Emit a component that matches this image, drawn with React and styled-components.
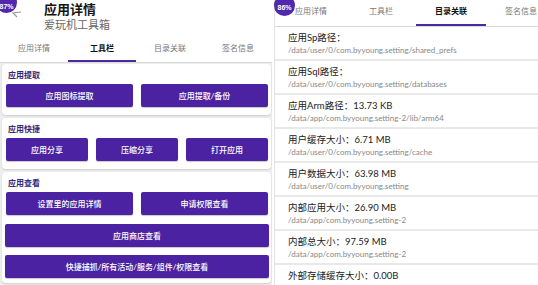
import React from 'react';
import styled, { createGlobalStyle } from 'styled-components';

const GlobalStyle = createGlobalStyle`
  html, body {
    margin: 0;
    padding: 0;
    background: #fff;
  }
  body {
    font-family: Lato, "Noto Sans CJK SC", sans-serif;
  }
`;

const Screen = styled.div`
  position: relative;
  display: flex;
  width: 538px;
  height: 285px;
  overflow: hidden;
  background: #fff;
`;

// ---------- left phone ----------
const LeftPane = styled.div`
  flex: none;
  width: 272px;
  height: 100%;
  display: flex;
  flex-direction: column;
  background: #eeeeee;
`;

const Header = styled.div`
  flex: none;
  background: #fff;
`;

const TitleBlock = styled.div`
  height: 34px;
  box-sizing: border-box;
  padding: 1px 0 0 44px;
`;

const AppTitle = styled.div`
  font-size: 13px;
  font-weight: 700;
  line-height: 16px;
  color: #151515;
`;

const AppSub = styled.div`
  margin-top: 1px;
  font-size: 11px;
  line-height: 13px;
  color: #666;
`;

const Tabs = styled.div`
  flex: none;
  display: flex;
  height: ${(p) => p.$h}px;
  box-sizing: border-box;
  padding-left: ${(p) => p.$pad || 0}px;
  border-bottom: 1px solid #dadada;
  background: #fff;
`;

const Tab = styled.div`
  position: relative;
  flex: ${(p) => (p.$w ? `0 0 ${p.$w}px` : '1 1 0')};
  display: flex;
  align-items: center;
  justify-content: center;
  padding-bottom: ${(p) => p.$pb || 0}px;
  box-sizing: border-box;
  font-size: 8px;
  color: ${(p) => (p.$active ? '#111' : '#777')};
  font-weight: ${(p) => (p.$active ? 700 : 400)};
  &::after {
    content: '';
    display: ${(p) => (p.$active ? 'block' : 'none')};
    position: absolute;
    left: 0;
    right: 0;
    bottom: 0;
    height: 2px;
    background: #4a2aa0;
  }
`;

const Body = styled.div`
  display: flex;
  flex-direction: column;
  gap: 3px;
  padding: 1px 1px 0 2px;
`;

const Card = styled.div`
  flex: none;
  background: #fff;
  border-radius: 4px;
  box-shadow: 0 1px 2px rgba(0, 0, 0, 0.14);
  padding: 5px 3px ${(p) => p.$pb || 8}px 4px;
`;

const CardTitle = styled.div`
  padding-left: 2px;
  margin-bottom: 3px;
  font-size: 8px;
  font-weight: 700;
  line-height: 12px;
  color: #33297a;
`;

const Rows = styled.div`
  display: flex;
  flex-direction: column;
  gap: 8.5px;
`;

const ButtonRow = styled.div`
  display: grid;
  grid-template-columns: repeat(${(p) => p.$cols}, 1fr);
  column-gap: 8px;
  margin: 0 ${(p) => (p.$wide ? '-1px' : '0')};
`;

const Button = styled.div`
  height: 23px;
  display: flex;
  align-items: center;
  justify-content: center;
  border-radius: 2px;
  background: #4b22a2;
  box-shadow: 0 1px 1px rgba(0, 0, 0, 0.22);
  color: #fff;
  font-size: 8px;
  font-weight: 500;
`;

// ---------- right phone ----------
const RightPane = styled.div`
  flex: none;
  width: 282px;
  height: 100%;
  margin-left: 2px;
  border-left: 1px solid #e3e3e3;
  background: #e9e9e9;
  display: flex;
  flex-direction: column;
`;

const List = styled.div`
  flex: none;
  display: flex;
  flex-direction: column;
  gap: 2px;
`;

const Item = styled.div`
  flex: none;
  background: #fff;
  padding: 5px 0 4px 13px;
`;

const ItemTitle = styled.div`
  font-size: 9.5px;
  line-height: 12px;
  color: #222;
`;

const ItemPath = styled.div`
  margin-top: 1px;
  font-size: 8px;
  line-height: 10px;
  color: #888;
  white-space: nowrap;
`;

// ---------- floating memory ball ----------
const Ball = styled.div`
  position: absolute;
  left: ${(p) => p.$x}px;
  top: ${(p) => p.$y}px;
  width: 21px;
  height: 21px;
  border-radius: 50%;
  background: #5128ab;
  color: #fff;
  font-size: 7px;
  font-weight: 700;
  display: flex;
  align-items: center;
  justify-content: center;
  padding-top: ${(p) => p.$pt || 0}px;
  box-sizing: border-box;
  font-family: "Liberation Sans", sans-serif;
`;

const Tail = styled.svg`
  position: absolute;
  left: 10px;
  top: 9px;
`;

const leftTabs = ['应用详情', '工具栏', '目录关联', '签名信息'];

const items = [
  ['应用Sp路径：', '/data/user/0/com.byyoung.setting/shared_prefs'],
  ['应用Sql路径：', '/data/user/0/com.byyoung.setting/databases'],
  ['应用Arm路径：13.73 KB', '/data/app/com.byyoung.setting-2/lib/arm64'],
  ['用户缓存大小：6.71 MB', '/data/user/0/com.byyoung.setting/cache'],
  ['用户数据大小：63.98 MB', '/data/user/0/com.byyoung.setting'],
  ['内部应用大小：26.90 MB', '/data/app/com.byyoung.setting-2'],
  ['内部总大小：97.59 MB', '/data/app/com.byyoung.setting-2'],
  ['外部存储缓存大小：0.00B', null],
];

const App = () => {
  return (
    <Screen>
      <GlobalStyle />
      <LeftPane>
        <Header>
          <TitleBlock>
            <AppTitle>应用详情</AppTitle>
            <AppSub>爱玩机工具箱</AppSub>
          </TitleBlock>
          <Tabs $h={29}>
            {leftTabs.map((t, i) => (
              <Tab key={t} $active={i === 1} $pb={1}>{t}</Tab>
            ))}
          </Tabs>
        </Header>
        <Body>
          <Card>
            <CardTitle>应用提取</CardTitle>
            <ButtonRow $cols={2}>
              <Button>应用图标提取</Button>
              <Button>应用提取/备份</Button>
            </ButtonRow>
          </Card>
          <Card>
            <CardTitle>应用快捷</CardTitle>
            <ButtonRow $cols={3}>
              <Button>应用分享</Button>
              <Button>压缩分享</Button>
              <Button>打开应用</Button>
            </ButtonRow>
          </Card>
          <Card $pb={5}>
            <CardTitle>应用查看</CardTitle>
            <Rows>
              <ButtonRow $cols={2}>
                <Button>设置里的应用详情</Button>
                <Button>申请权限查看</Button>
              </ButtonRow>
              <ButtonRow $cols={1} $wide>
                <Button>应用商店查看</Button>
              </ButtonRow>
              <ButtonRow $cols={1} $wide>
                <Button>快捷捕抓/所有活动/服务/组件/权限查看</Button>
              </ButtonRow>
            </Rows>
          </Card>
        </Body>
      </LeftPane>

      <RightPane>
        <Tabs $h={27} $pad={1}>
          {leftTabs.map((t, i) => (
            <Tab key={t} $w={70} $active={i === 2} $pb={5}>{t}</Tab>
          ))}
        </Tabs>
        <List>
          {items.map(([title, path]) => (
            <Item key={title}>
              <ItemTitle>{title}</ItemTitle>
              {path && <ItemPath>{path}</ItemPath>}
            </Item>
          ))}
        </List>
      </RightPane>

      <Tail width="14" height="10" viewBox="0 0 14 10">
        <path d="M11 3 L3 4 L7 8" fill="none" stroke="#9a9a9a" strokeWidth="1.2" />
      </Tail>
      <Ball $x={-4} $y={-8} $pt={8}>87%</Ball>
      <Ball $x={274} $y={-5} $pt={4}>86%</Ball>
    </Screen>
  );
};

export default App;
